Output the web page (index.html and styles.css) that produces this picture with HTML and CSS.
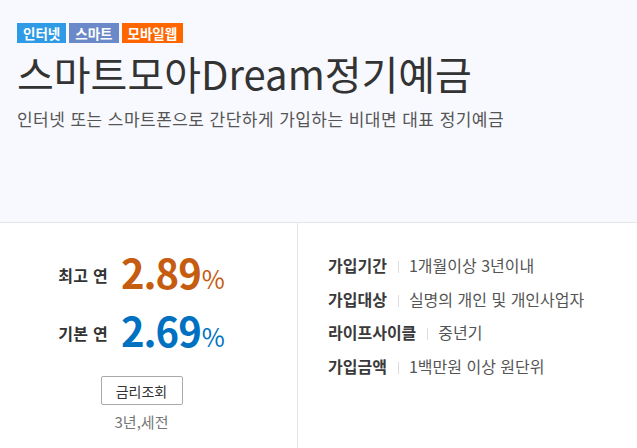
FILE: index.html
```html
<!DOCTYPE html>
<html lang="ko">
<head>
<meta charset="utf-8">
<link rel="stylesheet" href="styles.css">
</head>
<body>
<section class="hero">
  <div class="badges">
    <span class="badge badge-blue">인터넷</span>
    <span class="badge badge-slate">스마트</span>
    <span class="badge badge-orange">모바일웹</span>
  </div>
  <h1 class="title">스마트모아Dream정기예금</h1>
  <p class="subtitle">인터넷 또는 스마트폰으로 간단하게 가입하는 비대면 대표 정기예금</p>
</section>
<section class="info">
  <div class="rates">
    <div class="rate-row">
      <span class="rate-label">최고 연</span>
      <span class="rate-value rate-max">2.89<small>%</small></span>
    </div>
    <div class="rate-row">
      <span class="rate-label">기본 연</span>
      <span class="rate-value rate-base">2.69<small>%</small></span>
    </div>
    <button class="rate-btn" type="button">금리조회</button>
    <p class="rate-note">3년,세전</p>
  </div>
  <dl class="details">
    <div class="detail-row"><dt>가입기간</dt><dd>1개월이상 3년이내</dd></div>
    <div class="detail-row"><dt>가입대상</dt><dd>실명의 개인 및 개인사업자</dd></div>
    <div class="detail-row"><dt>라이프사이클</dt><dd>중년기</dd></div>
    <div class="detail-row"><dt>가입금액</dt><dd>1백만원 이상 원단위</dd></div>
  </dl>
</section>
</body>
</html>
```
FILE: styles.css
```css
* { box-sizing: border-box; }
html, body { margin: 0; padding: 0; }
body {
  width: 637px;
  height: 448px;
  overflow: hidden;
  background: #fff;
  font-family: "Noto Sans CJK KR", "Noto Sans", sans-serif;
  color: #333;
}
.hero {
  height: 223px;
  background: #f8f9fe;
  border-bottom: 1px solid #e4e5eb;
  padding: 23px 17px 0;
}
.badges { display: flex; gap: 3px; }
.badge {
  height: 20px;
  line-height: 20px;
  padding: 0 6px;
  font-size: 13.5px;
  font-weight: 700;
  color: #fff;
}
.badge-blue { background: #2f9be6; }
.badge-slate { background: #6b88c8; }
.badge-orange { background: #ff6600; }
.title {
  margin: 4px 0 0;
  font-size: 40px;
  font-weight: 400;
  line-height: 52px;
  color: #333;
}
.subtitle {
  margin: 8px 0 0;
  font-size: 17px;
  line-height: 24px;
  letter-spacing: 0.45px;
  color: #555;
}
.info { display: flex; height: 225px; }
.rates {
  width: 298px;
  border-right: 1px solid #e6e6e6;
  padding: 23px 14px 0 0;
  display: flex;
  flex-direction: column;
  align-items: center;
}
.rate-row {
  display: flex;
  align-items: center;
  gap: 13px;
  height: 58px;
}
.rate-label { font-size: 16px; line-height: 16px; font-weight: 700; color: #333; letter-spacing: 0.3px; }
.rate-value { font-size: 40px; font-weight: 700; letter-spacing: -1px; line-height: 40px; }
.rate-value small { font-size: 25px; font-weight: 400; margin-left: 1px; letter-spacing: 0; }
.rate-max { color: #c55c10; }
.rate-base { color: #0071c1; }
.rate-btn {
  margin-top: 14px;
  width: 82px;
  height: 29px;
  background: #fff;
  border: 1px solid #aaa;
  border-radius: 2px;
  font-family: inherit;
  font-size: 14px;
  color: #333;
  padding: 0;
}
.rate-note { margin: 6px 0 0; font-size: 15px; line-height: 22px; color: #777; }
.details { margin: 0; padding: 25px 0 0 30px; }
.detail-row { display: flex; align-items: center; height: 33.7px; font-size: 16px; }
.detail-row dt { font-weight: 700; color: #3a3a3a; }
.detail-row dt::after {
  content: "";
  display: inline-block;
  width: 1px;
  height: 12px;
  background: #ddd;
  margin: 0 10px 0 11px;
  vertical-align: -1px;
}
.detail-row dd { margin: 0; color: #555; }
```
